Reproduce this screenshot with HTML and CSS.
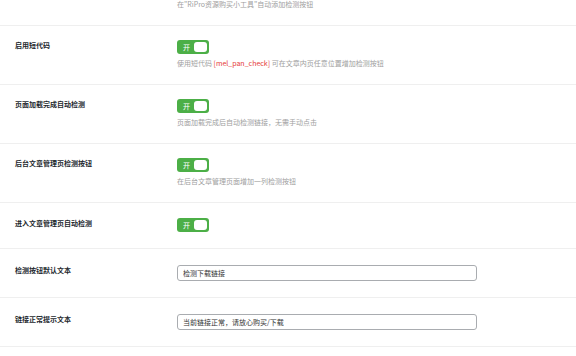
FILE: index.html
```html
<!DOCTYPE html>
<html lang="zh">
<head>
<meta charset="utf-8">
<link rel="stylesheet" href="styles.css">
</head>
<body>
<div class="panel">
  <div class="row top">
    <div class="label"></div>
    <div class="field"><p class="desc">在"RiPro资源购买小工具"自动添加检测按钮</p></div>
  </div>
  <div class="row">
    <div class="label">启用短代码</div>
    <div class="field">
      <span class="switch"><span class="on">开</span><span class="knob"></span></span>
      <p class="desc">使用短代码 <span class="code">[mel_pan_check]</span> 可在文章内页任意位置增加检测按钮</p>
    </div>
  </div>
  <div class="row">
    <div class="label">页面加载完成自动检测</div>
    <div class="field">
      <span class="switch"><span class="on">开</span><span class="knob"></span></span>
      <p class="desc">页面加载完成后自动检测链接，无需手动点击</p>
    </div>
  </div>
  <div class="row">
    <div class="label">后台文章管理页检测按钮</div>
    <div class="field">
      <span class="switch"><span class="on">开</span><span class="knob"></span></span>
      <p class="desc">在后台文章管理页面增加一列检测按钮</p>
    </div>
  </div>
  <div class="row nodesc">
    <div class="label">进入文章管理页自动检测</div>
    <div class="field">
      <span class="switch"><span class="on">开</span><span class="knob"></span></span>
    </div>
  </div>
  <div class="row input-row">
    <div class="label">检测按钮默认文本</div>
    <div class="field"><input class="text" type="text" value="检测下载链接"></div>
  </div>
  <div class="row input-row">
    <div class="label">链接正常提示文本</div>
    <div class="field"><input class="text" type="text" value="当前链接正常，请放心购买/下载"></div>
  </div>
</div>
</body>
</html>
```
FILE: styles.css
```css
* { box-sizing: border-box; }
html, body {
  margin: 0;
  padding: 0;
  background: #fff;
  font-family: "Noto Sans CJK SC", "Noto Sans", sans-serif;
  overflow: hidden;
}
.panel {
  width: 576px;
}
.row {
  display: grid;
  grid-template-columns: 162px 1fr;
  padding: 14px 0 16px 15px;
  border-bottom: 1px solid #efefef;
}
.row.top {
  padding: 0 0 16px 15px;
}
.row.top .desc {
  margin-top: -1px;
}
.row.nodesc {
  padding-top: 15px;
  padding-bottom: 16px;
}
.label {
  font-size: 7px;
  line-height: 10px;
  font-weight: bold;
  color: #23282d;
}
.field {
  display: flex;
  flex-direction: column;
  align-items: flex-start;
}
.desc {
  margin: 4px 0 0;
  font-size: 7px;
  line-height: 10px;
  color: #a0a0a0;
}
.code {
  color: #e53935;
}
.switch {
  display: flex;
  align-items: center;
  justify-content: space-between;
  width: 32px;
  height: 14px;
  padding: 0 2px 0 6px;
  background: #4caf47;
  border-radius: 3px;
}
.on {
  color: #fff;
  font-size: 7px;
  line-height: 10px;
}
.knob {
  width: 13px;
  height: 10px;
  background: #fff;
  border-radius: 3px;
}
.input-row {
  padding-top: 16px;
  padding-bottom: 16px;
}
.text {
  width: 300px;
  height: 16px;
  margin: 0;
  padding: 0 5px;
  border: 1px solid #a9acb0;
  border-radius: 3px;
  font-family: "Noto Sans CJK SC", "Noto Sans", sans-serif;
  font-size: 7px;
  color: #333;
  background: #fff;
  outline: none;
}
```
